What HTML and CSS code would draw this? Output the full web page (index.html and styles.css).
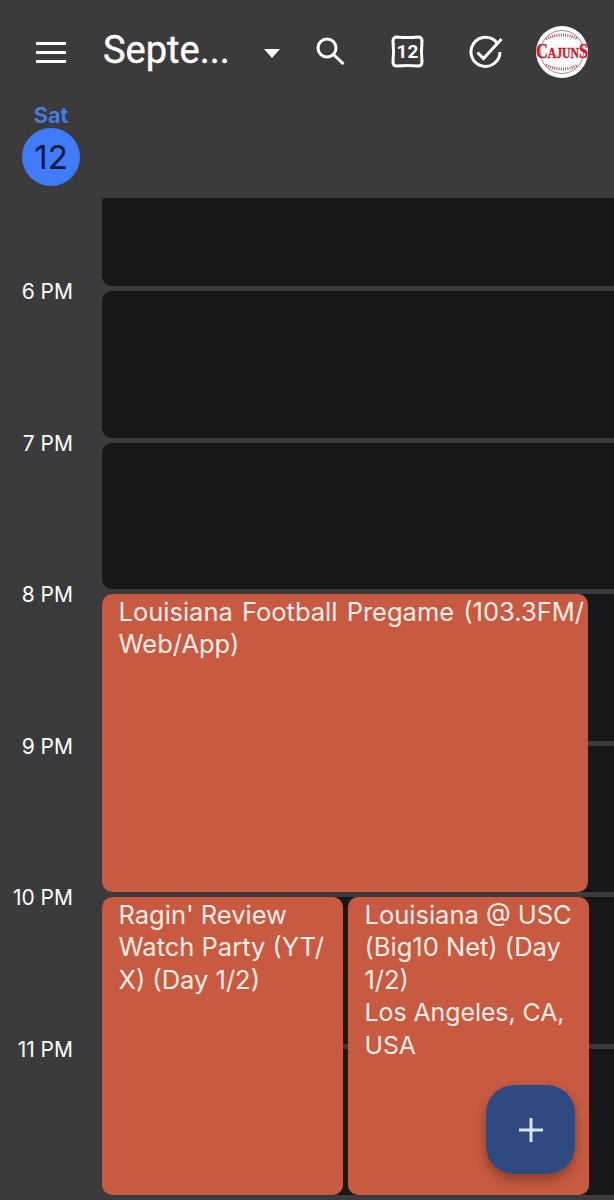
FILE: index.html
```html
<!DOCTYPE html>
<html lang="en">
<head>
  <meta charset="UTF-8" />
  <title>Calendar</title>
  <link rel="stylesheet" href="styles.css">
</head>
<body>
  <div class="app">
    <header class="top">
      <div class="toolbar">
        <button class="menu-btn" aria-label="Menu">
          <svg width="30" height="21" viewBox="0 0 30 21"><path d="M0 1.5h30M0 10.5h30M0 19.5h30" stroke="#fff" stroke-width="3"/></svg>
        </button>
        <div class="month">Septe...</div>
        <svg class="caret" width="16" height="9" viewBox="0 0 16 9"><path d="M0 0h16L8 9z" fill="#fff"/></svg>
        <svg class="search" width="29" height="28" viewBox="0 0 29 28" fill="none" stroke="#fff" stroke-width="3"><circle cx="11" cy="11" r="9"/><path d="M17.500 17.500L27.500 27"/></svg>
        <svg class="today" width="33" height="33" viewBox="0 0 33 33" fill="none">
          <path d="M6 2C12 2.600 21 2.600 27 2Q31 2 31 6C30.400 12 30.400 21 31 27Q31 31 27 31C21 30.400 12 30.400 6 31Q2 31 2 27C2.600 21 2.600 12 2 6Q2 2 6 2Z" stroke="#fff" stroke-width="3"/>
          <text x="16.5" y="23" text-anchor="middle" class="today-num">12</text>
        </svg>
        <svg class="tasks" width="34" height="34" viewBox="0 0 34 34" fill="none" stroke="#fff" stroke-width="3">
          <path d="M28 8A14.500 14.500 0 1 0 31 17"/>
          <path d="M8.500 17.500L14.500 23.500L32.500 4"/>
        </svg>
        <svg class="logo" width="54" height="54" viewBox="0 0 54 54">
          <circle cx="27" cy="27" r="26" fill="#fff"/>
          <circle cx="27" cy="27" r="21.500" fill="none" stroke="#8c6a6a" stroke-width="0.8"/>
          <path d="M11 14Q27 6 43 14" fill="none" stroke="#b8505a" stroke-width="3" stroke-dasharray="1 1.200"/>
          <path d="M11 40Q27 48 43 40" fill="none" stroke="#b8505a" stroke-width="3" stroke-dasharray="1 1.200"/>
          <text transform="translate(1 33) scale(0.78 1)" class="logo-text"><tspan class="logo-big">C</tspan>AJUN<tspan class="logo-big">S</tspan></text>
        </svg>
      </div>
      <div class="day-head">
        <div class="day-name">Sat</div>
        <div class="day-num">12</div>
      </div>
    </header>

    <main class="schedule">
      <div class="hours">
        <div class="hour">6 PM</div>
        <div class="hour">7 PM</div>
        <div class="hour">8 PM</div>
        <div class="hour">9 PM</div>
        <div class="hour">10 PM</div>
        <div class="hour">11 PM</div>
      </div>
      <div class="grid">
        <div class="cell first"></div>
        <div class="cell"></div>
        <div class="cell"></div>
        <div class="cell"></div>
        <div class="cell"></div>
        <div class="cell"></div>
        <div class="cell"></div>

        <div class="event pregame">Louisiana Football Pregame (103.3FM/ Web/App)</div>
        <div class="event review">Ragin' Review Watch Party (YT/ X) (Day 1/2)</div>
        <div class="event game">Louisiana @ USC (Big10 Net) (Day 1/2)<div class="place">Los Angeles, CA, USA</div></div>
      </div>
    </main>

    <button class="fab" aria-label="Create">
      <svg width="24" height="24" viewBox="0 0 24 24"><path d="M12 0v24M0 12h24" stroke="#dbe4ff" stroke-width="3"/></svg>
    </button>
  </div>
</body>
</html>
```

FILE: styles.css
```css
* {
  box-sizing: border-box;
}
body {
  margin: 0;
  background: #3b3b3d;
  font-family: 'Inter', sans-serif;
  color: #fff;
}
.app {
  position: relative;
  width: 614px;
  height: 1200px;
  overflow: hidden;
}
.top {
  height: 198px;
  padding-top: 25px;
}
.toolbar {
  display: flex;
  align-items: center;
  height: 54px;
}
.toolbar > * {
  flex: none;
}
.menu-btn {
  display: flex;
  width: 30px;
  height: 21px;
  margin-left: 36px;
  padding: 0;
  border: none;
  background: none;
}
.month {
  width: 161px;
  margin-left: 37px;
  margin-top: -4px;
  font-family: 'Roboto', sans-serif;
  font-size: 38px;
  -webkit-text-stroke: 0.4px #fff;
  white-space: nowrap;
}
.caret {
  margin-top: 2px;
}
.search {
  margin-left: 36px;
  margin-top: -3px;
}
.today {
  margin-left: 46px;
  margin-top: -1px;
}
.tasks {
  margin-left: 45px;
  margin-top: -1px;
}
.today-num {
  font-family: 'Roboto', sans-serif;
  font-size: 19px;
  font-weight: 700;
  fill: #fff;
}
.logo {
  margin-left: 32px;
}
.logo-text {
  font-family: 'Liberation Serif', serif;
  font-size: 15px;
  font-weight: 700;
  fill: #c8192e;
  stroke: #c8192e;
  stroke-width: 0.4px;
}
.logo-big {
  font-size: 21px;
}
.day-head {
  display: flex;
  flex-direction: column;
  align-items: center;
  width: 102px;
  margin-top: 24px;
}
.day-name {
  font-size: 22px;
  font-weight: 600;
  line-height: 24px;
  color: #4a7de8;
}
.day-num {
  display: flex;
  justify-content: center;
  align-items: center;
  width: 58px;
  height: 58px;
  margin-top: 1px;
  border-radius: 50%;
  background: #3f7bfb;
  color: #0c1a3a;
  font-size: 33px;
}

.schedule {
  display: flex;
  height: 1002px;
}
.hours {
  width: 102px;
  flex: none;
  padding-top: 81px;
}
.hour {
  height: 151.500px;
  padding-right: 29px;
  text-align: right;
  font-size: 21px;
  line-height: 26px;
}
.grid {
  position: relative;
  flex: 1;
  display: flex;
  flex-direction: column;
  gap: 5px;
}
.cell {
  height: 146.500px;
  flex: none;
  background: #18181a;
  border-radius: 10px 0 0 10px;
}
.cell.first {
  height: 88px;
  border-radius: 0 0 0 10px;
}
.event {
  position: absolute;
  padding: 1.500px 2px 0 16.500px;
  border-radius: 10px;
  background: #c75a40;
  color: #fdeee9;
  font-size: 25.500px;
  line-height: 32.500px;
}
.place {
  font-size: 24.800px;
}
.pregame {
  top: 396px;
  left: 0;
  width: 486px;
  height: 298px;
  word-spacing: 2px;
}
.review {
  top: 699px;
  left: 0;
  width: 241px;
  height: 298px;
}
.game {
  top: 699px;
  left: 246px;
  width: 241px;
  height: 298px;
}
.fab {
  position: absolute;
  top: 1085px;
  left: 486px;
  display: flex;
  justify-content: center;
  align-items: center;
  width: 89px;
  height: 89px;
  padding: 0;
  border: none;
  border-radius: 28px;
  background: #2f4a80;
  box-shadow: 0 6px 12px rgba(0, 0, 0, 0.3);
}
```
